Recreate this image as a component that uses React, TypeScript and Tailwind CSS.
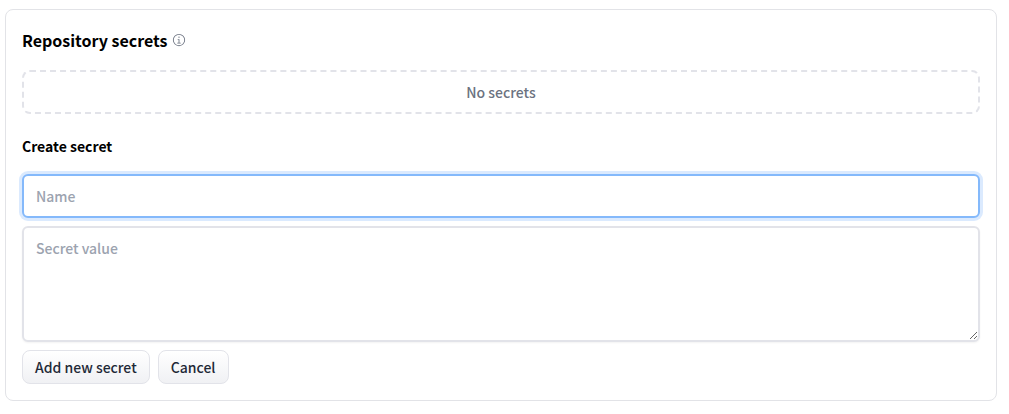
import React from "react";

function InfoIcon() {
  return (
    <svg viewBox="0 0 32 32" className="size-3.5 fill-current" aria-hidden="true">
      <path d="M17 22V14H13v2h2v6H12v2h8V22Z" />
      <path d="M16 8a1.5 1.5 0 1 0 1.5 1.5A1.5 1.5 0 0 0 16 8Z" />
      <path d="M16 30A14 14 0 1 1 30 16 14 14 0 0 1 16 30ZM16 4A12 12 0 1 0 28 16 12 12 0 0 0 16 4Z" />
    </svg>
  );
}

function Button({ children, type }: { children: React.ReactNode; type: "submit" | "button" }) {
  return (
    <button
      type={type}
      className="rounded-lg border border-[#e2e3e9] bg-linear-to-b from-white to-[#f0f1f4] px-3 py-1 text-sm leading-6 font-medium text-[#1f2937]"
    >
      {children}
    </button>
  );
}

export default function App() {
  return (
    <main className="bg-white pt-[9px] pr-3 pb-3 pl-[5px] font-['Noto_Sans_CJK_SC',sans-serif] text-sm leading-6 font-medium text-black">
      <section className="rounded-lg border border-[#e2e3e7] p-4">
        <header className="mb-4 flex items-center gap-1">
          <h2 className="text-base leading-7 font-bold">Repository secrets</h2>
          <span className="text-[#6b7280]">
            <InfoIcon />
          </span>
        </header>
        <div className="rounded-lg border-2 border-dashed border-[#e2e3e9] py-2 text-center text-[#6b7280]">
          No secrets
        </div>
        <form onSubmit={(event) => event.preventDefault()}>
          <h3 className="mt-5 mb-4 text-sm leading-6 font-bold">Create secret</h3>
          <div className="flex flex-col gap-2">
            <input
              type="text"
              aria-label="Name"
              placeholder="Name"
              className="block h-11 w-full rounded-md border-2 border-[#84b9fb] bg-white px-3 ring-3 ring-[#dbeafe] outline-none placeholder:text-[#9ca3af]"
            />
            <textarea
              aria-label="Secret value"
              placeholder="Secret value"
              className="block h-[116px] w-full resize rounded-md border-2 border-[#e2e3e9] bg-white px-3 py-2 shadow-xs outline-none placeholder:text-[#9ca3af]"
            />
            <div className="flex gap-2">
              <Button type="submit">Add new secret</Button>
              <Button type="button">Cancel</Button>
            </div>
          </div>
        </form>
      </section>
    </main>
  );
}
